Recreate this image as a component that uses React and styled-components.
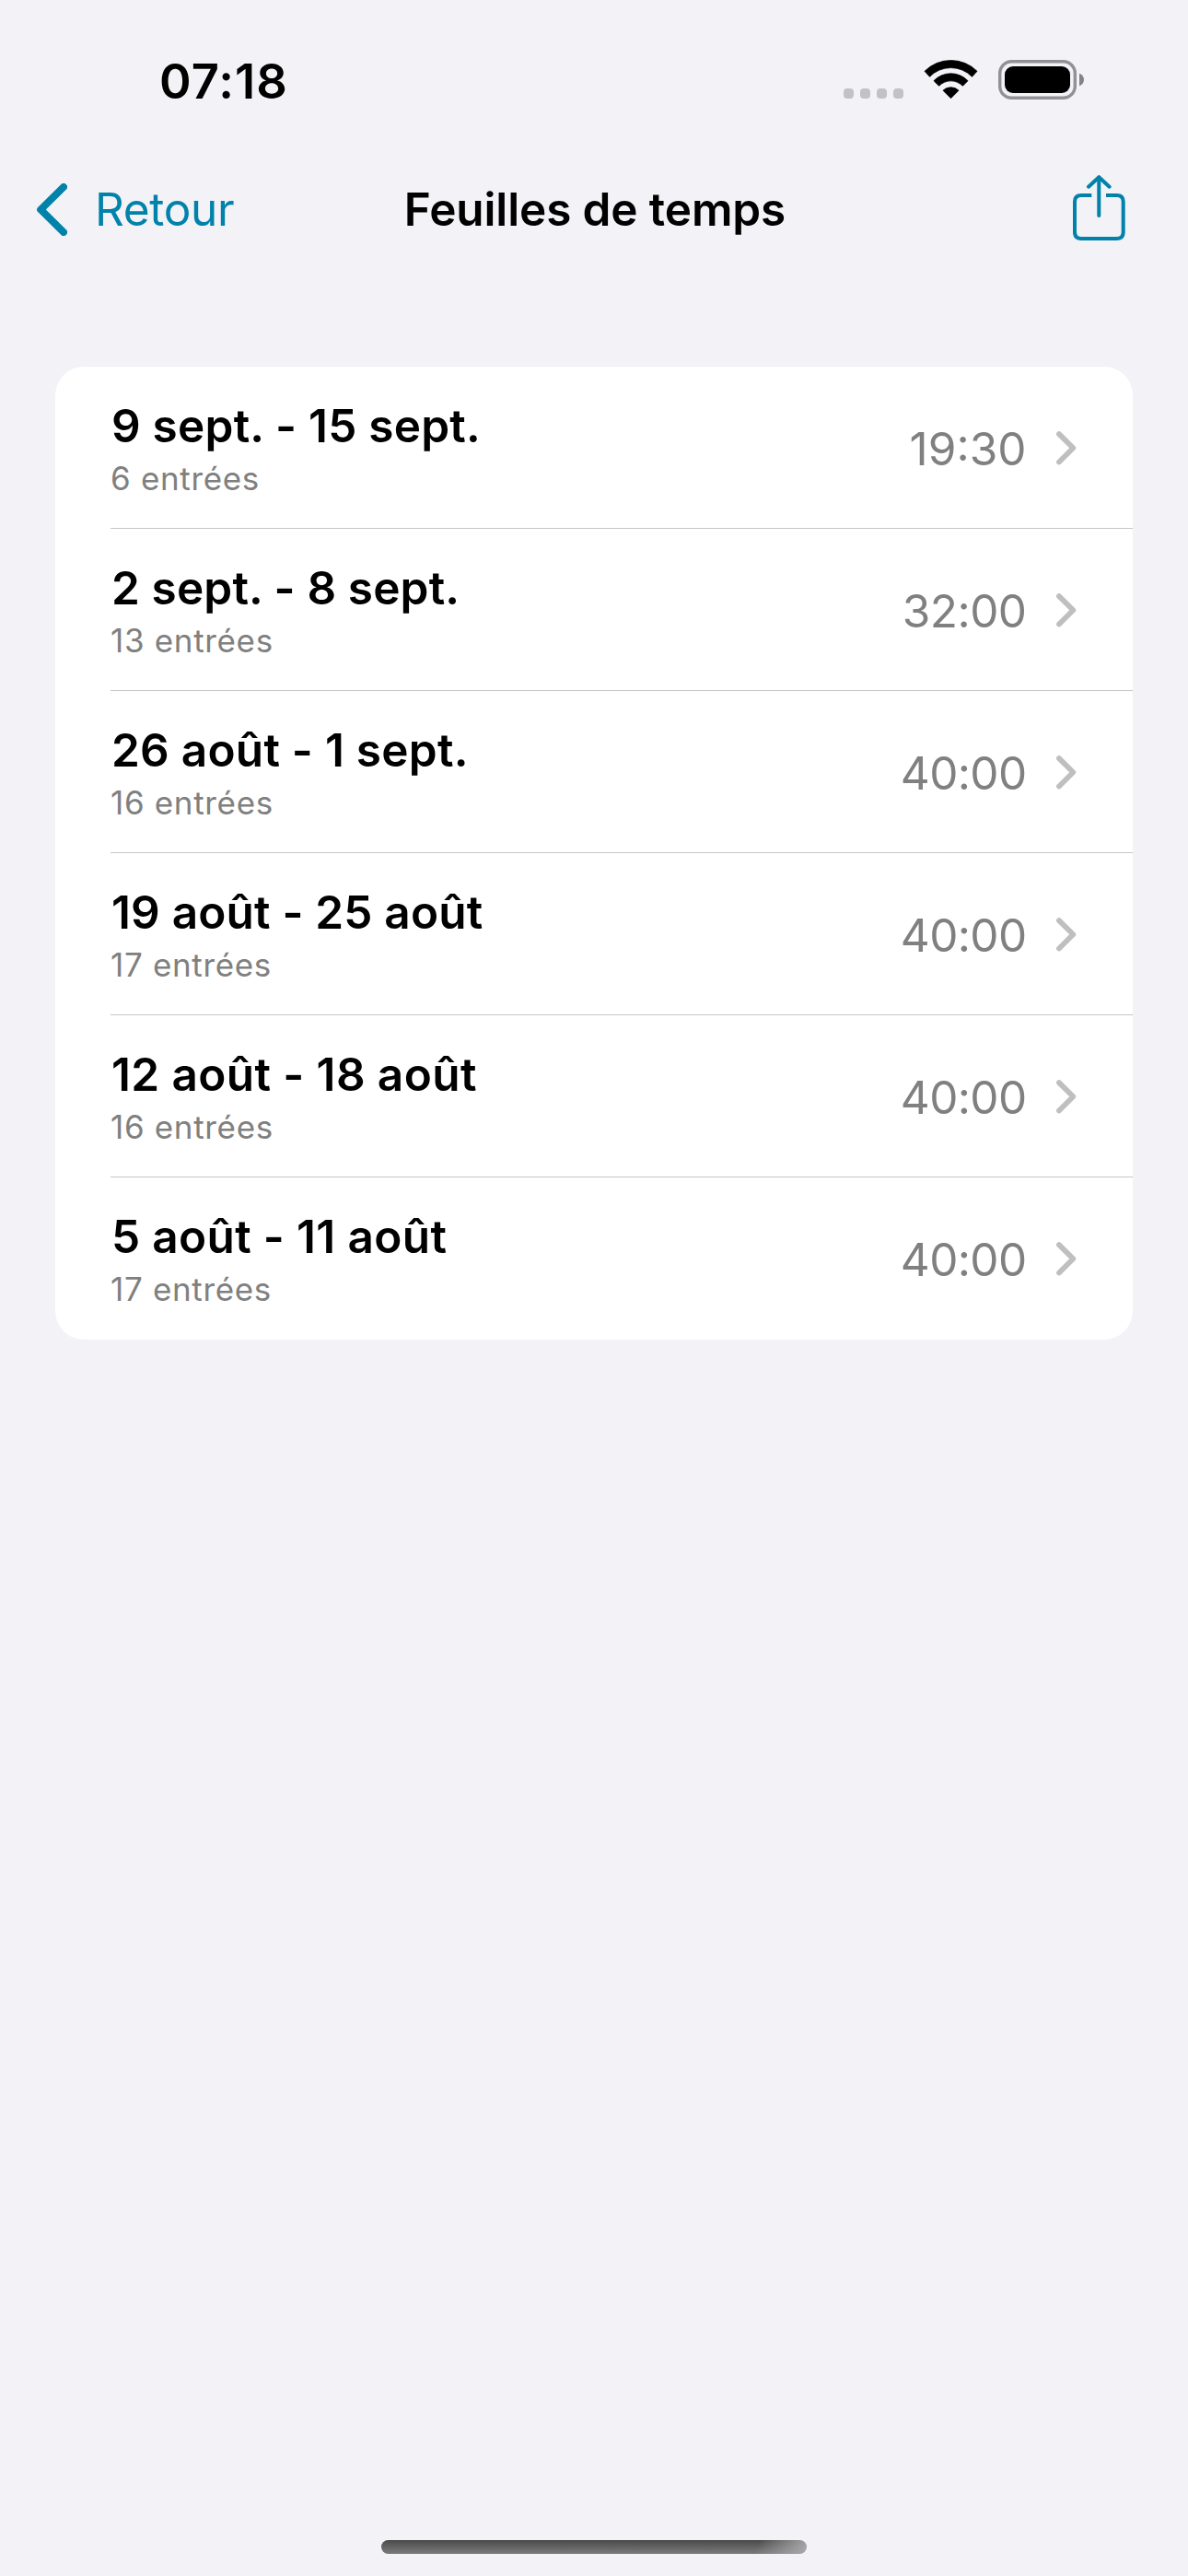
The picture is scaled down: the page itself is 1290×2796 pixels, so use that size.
import React from 'react';
import styled, { createGlobalStyle } from 'styled-components';

const GlobalStyle = createGlobalStyle`
  * { box-sizing: border-box; }
  body { margin: 0; background: #f2f2f7; }
`;

const accent = '#0082aa';

const Screen = styled.div`
  display: flex;
  flex-direction: column;
  width: 1290px;
  height: 2796px;
  background: #f2f2f7;
  color: #000;
  font-family: Inter, 'Liberation Sans', sans-serif;
  overflow: hidden;
`;

const StatusBar = styled.div`
  display: flex;
  align-items: center;
  justify-content: space-between;
  height: 176px;
  flex: none;
  padding: 0 113px 0 173px;
`;

const Clock = styled.time`
  font-size: 52.5px;
  line-height: 64px;
  font-weight: 600;
  letter-spacing: 1.07px;
`;

const Indicators = styled.div`
  display: flex;
  align-items: flex-end;
  gap: 22px;
  padding-bottom: 3px;
`;

const Icon = styled.svg`
  display: block;
  flex: none;
  fill: none;
`;

const CellularDots = styled.div`
  display: flex;
  gap: 7px;
  margin-bottom: 1px;
`;

const Dot = styled.span`
  width: 11px;
  height: 11px;
  border-radius: 4px;
  background: #c2c1c6;
`;

const NavBar = styled.header`
  display: grid;
  grid-template-columns: 1fr auto 1fr;
  align-items: center;
  height: 102px;
  flex: none;
  padding: 0 68px 0 40px;
`;

const BackButton = styled.a`
  display: flex;
  align-items: center;
  gap: 30px;
  color: ${accent};
  font-size: 49.5px;
  line-height: 60px;
  letter-spacing: -0.34px;
`;

const NavTitle = styled.h1`
  margin: 0;
  padding-left: 30px;
  font-size: 49.5px;
  line-height: 60px;
  font-weight: 600;
  letter-spacing: -0.12px;
`;

const ShareButton = styled.a`
  justify-self: end;
  padding-bottom: 3px;
  color: ${accent};
`;

const Card = styled.ul`
  display: flex;
  flex-direction: column;
  flex: none;
  margin: 120px 60px 0;
  padding: 0;
  list-style: none;
  background: #fff;
  border-radius: 31px;
  overflow: hidden;
`;

const Row = styled.li`
  display: flex;
  align-items: center;
  height: 176px;
  margin-left: 60px;
  padding-right: 61px;
  box-shadow: ${({ $last }) => ($last ? 'none' : 'inset 0 -1px 0 #c6c6c8')};
`;

const Labels = styled.div`
  display: flex;
  flex-direction: column;
  flex: 1;
  gap: 6px;
`;

const Period = styled.span`
  padding-left: 1px;
  font-size: 49.5px;
  line-height: 60px;
  font-weight: 600;
  letter-spacing: ${({ $tracking }) => $tracking}px;
`;

const Entries = styled.span`
  font-size: 35px;
  line-height: 42px;
  letter-spacing: 0.67px;
  color: #808080;
`;

const Duration = styled.span`
  padding-top: 2px;
  margin-right: 32.5px;
  font-size: 49.5px;
  line-height: 60px;
  letter-spacing: ${({ $tracking }) => $tracking}px;
  color: #808080;
`;

const HomeArea = styled.footer`
  display: flex;
  justify-content: center;
  margin-top: auto;
  padding-bottom: 24px;
`;

const HomeIndicator = styled.div`
  width: 462px;
  height: 15px;
  border-radius: 8px;
  background:
    linear-gradient(105deg, rgba(172, 172, 174, 0) 88%, rgba(172, 172, 174, 0.95) 100%),
    linear-gradient(#4a4a4b, #7b7b7d);
`;

const weeks = [
  { period: '9 sept. - 15 sept.', entries: 6, total: '19:30', tracking: 0.23, totalTracking: 0 },
  { period: '2 sept. - 8 sept.', entries: 13, total: '32:00', tracking: 0.15, totalTracking: -0.55 },
  { period: '26 août - 1 sept.', entries: 16, total: '40:00', tracking: 0.26, totalTracking: -0.65 },
  { period: '19 août - 25 août', entries: 17, total: '40:00', tracking: 0.19, totalTracking: -0.65 },
  { period: '12 août - 18 août', entries: 16, total: '40:00', tracking: 0.4, totalTracking: -0.65 },
  { period: '5 août - 11 août', entries: 17, total: '40:00', tracking: 0.35, totalTracking: -0.65 },
];

const WifiIcon = () => (
  <Icon width="59" height="43" viewBox="0 0 59 43">
    <g fill="#000" stroke="#000" strokeWidth="0.8" strokeLinejoin="round">
      <path d="M1 12.3A40.3 40.3 0 0 1 58 12.3L52.5 18.3A32 32 0 0 0 6.5 18.3Z" />
      <path d="M11 22.7A25.6 25.6 0 0 1 48 22.7L42.4 28.3A18 18 0 0 0 16.6 28.3Z" />
      <path d="M21 33.2A12.2 12.2 0 0 1 38 33.2L29.5 41.7Z" />
    </g>
  </Icon>
);

const BatteryIcon = () => (
  <Icon width="93" height="43" viewBox="0 0 93 43">
    <rect x="1.7" y="1.7" width="81.6" height="39.6" rx="12.8" stroke="#929194" strokeWidth="3.4" />
    <rect x="7" y="7" width="71" height="29" rx="9" fill="#000" />
    <path d="M88 14.7C91 15.7 93 18.4 93 21.5S91 27.3 88 28.3Z" fill="#838285" />
  </Icon>
);

const BackIcon = () => (
  <Icon width="33" height="57" viewBox="0 0 33 57">
    <path
      d="M29 4L4.2 28.5L29 53"
      stroke="currentColor"
      strokeWidth="8"
      strokeLinecap="round"
      strokeLinejoin="round"
    />
  </Icon>
);

const ShareIcon = () => (
  <Icon width="57" height="71" viewBox="0 0 57 71">
    <g stroke="currentColor" strokeWidth="4" strokeLinejoin="round">
      <path d="M20.3 22H9Q2 22 2 29V62Q2 69 9 69H47.7Q54.7 69 54.7 62V29Q54.7 22 47.7 22H36" />
      <path d="M28.3 2.2V44M17 12.7L28.3 2.2L39.6 12.7" strokeLinecap="round" />
    </g>
  </Icon>
);

const DisclosureIcon = () => (
  <Icon width="22" height="37" viewBox="0 0 22 37">
    <path
      d="M3 3.1L18.3 18.3L3 33.5"
      stroke="#bfbfbf"
      strokeWidth="5.8"
      strokeLinecap="round"
      strokeLinejoin="round"
    />
  </Icon>
);

export default function App() {
  return (
    <Screen>
      <GlobalStyle />
      <StatusBar>
        <Clock>07:18</Clock>
        <Indicators>
          <CellularDots>
            <Dot />
            <Dot />
            <Dot />
            <Dot />
          </CellularDots>
          <WifiIcon />
          <BatteryIcon />
        </Indicators>
      </StatusBar>
      <NavBar>
        <BackButton>
          <BackIcon />
          Retour
        </BackButton>
        <NavTitle>Feuilles de temps</NavTitle>
        <ShareButton>
          <ShareIcon />
        </ShareButton>
      </NavBar>
      <Card>
        {weeks.map((week, index) => (
          <Row key={week.period} $last={index === weeks.length - 1}>
            <Labels>
              <Period $tracking={week.tracking}>{week.period}</Period>
              <Entries>{week.entries} entrées</Entries>
            </Labels>
            <Duration $tracking={week.totalTracking}>{week.total}</Duration>
            <DisclosureIcon />
          </Row>
        ))}
      </Card>
      <HomeArea>
        <HomeIndicator />
      </HomeArea>
    </Screen>
  );
}
